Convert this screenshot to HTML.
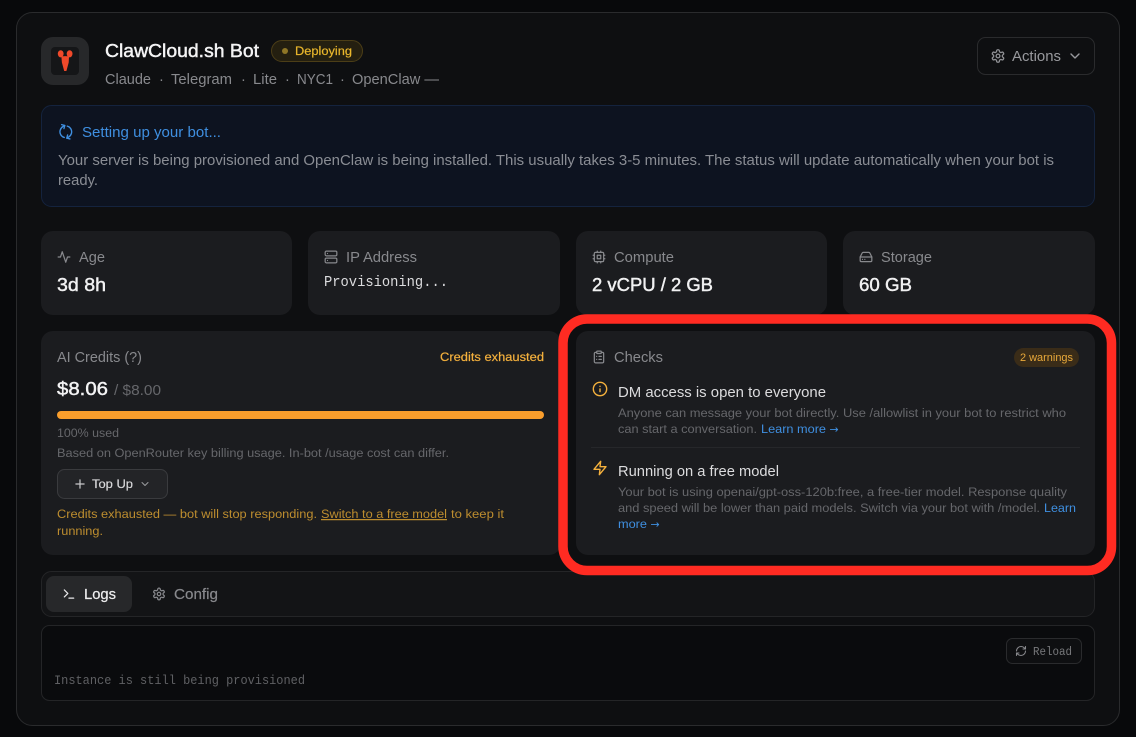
<!DOCTYPE html>
<html lang="en">
<head>
<meta charset="utf-8">
<title>ClawCloud.sh Bot</title>
<style>
html,body{margin:0;padding:0;background:#08090b;width:1136px;height:737px;overflow:hidden}
svg{display:block;position:absolute;left:0;top:0}
text{font-family:"Liberation Sans",sans-serif;font-size:14.5px;white-space:pre}
text.s{font-size:12.4px}
text.b{font-size:18.6px;stroke-width:.45px}
.mono{font-family:"Liberation Mono",monospace}
.m{stroke-width:.2px}
.i{fill:none;stroke-linecap:round;stroke-linejoin:round;stroke-width:2.1}
</style>
</head>
<body>
<svg xmlns="http://www.w3.org/2000/svg" width="1136" height="737" viewBox="0 0 1136 737">
<defs>
<g id="gear"><path d="M12.22 2h-.44a2 2 0 0 0-2 2v.18a2 2 0 0 1-1 1.73l-.43.25a2 2 0 0 1-2 0l-.15-.08a2 2 0 0 0-2.73.73l-.22.38a2 2 0 0 0 .73 2.73l.15.1a2 2 0 0 1 1 1.72v.51a2 2 0 0 1-1 1.74l-.15.09a2 2 0 0 0-.73 2.73l.22.38a2 2 0 0 0 2.73.73l.15-.08a2 2 0 0 1 2 0l.43.25a2 2 0 0 1 1 1.73V20a2 2 0 0 0 2 2h.44a2 2 0 0 0 2-2v-.18a2 2 0 0 1 1-1.73l.43-.25a2 2 0 0 1 2 0l.15.08a2 2 0 0 0 2.73-.73l.22-.39a2 2 0 0 0-.73-2.73l-.15-.08a2 2 0 0 1-1-1.74v-.5a2 2 0 0 1 1-1.74l.15-.09a2 2 0 0 0 .73-2.73l-.22-.38a2 2 0 0 0-2.73-.73l-.15.08a2 2 0 0 1-2 0l-.43-.25a2 2 0 0 1-1-1.73V4a2 2 0 0 0-2-2z"/><circle cx="12" cy="12" r="3"/></g>
<g id="refresh"><path d="M3 12a9 9 0 0 1 9-9 9.75 9.75 0 0 1 6.74 2.74L21 8"/><path d="M21 3v5h-5"/><path d="M21 12a9 9 0 0 1-9 9 9.75 9.75 0 0 1-6.74-2.74L3 16"/><path d="M8 16H3v5"/></g>
<path id="chev" d="m6 9 6 6 6-6"/>
</defs>

<rect width="1136" height="737" fill="#08090b"/>
<rect x="16.5" y="12.5" width="1103" height="713" rx="16" fill="#0e0f11" stroke="#2a2b2d"/>

<!-- header -->
<rect x="41" y="37" width="48" height="48" rx="12" fill="#27282a"/>
<rect x="51" y="47" width="28" height="28" rx="4" fill="#151618"/>
<g fill="#f0492a">
<ellipse cx="60.7" cy="53.8" rx="2.9" ry="3.6"/><ellipse cx="69.6" cy="53.8" rx="2.9" ry="3.6"/>
<path d="M61.4 56.6 Q65.2 55.6 69 56.6 L68.7 62.5 L66.4 71 L64.2 71 L61.9 62.5 Z"/>
</g>
<text x="105" y="57" class="b" fill="#f4f4f5" stroke="#f4f4f5" textLength="154" lengthAdjust="spacingAndGlyphs">ClawCloud.sh Bot</text>
<rect x="271.5" y="40.5" width="91" height="21" rx="10.5" fill="#241f10" stroke="#4c3e17"/>
<circle cx="285" cy="51" r="3" fill="#8f7626"/>
<text x="295" y="55" class="s m" fill="#eab72c" stroke="#eab72c" textLength="57" lengthAdjust="spacingAndGlyphs">Deploying</text>
<g fill="#88898d">
<text x="105" y="84" textLength="46" lengthAdjust="spacingAndGlyphs">Claude</text>
<text x="159" y="84">·</text>
<text x="171" y="84" textLength="61" lengthAdjust="spacingAndGlyphs">Telegram</text>
<text x="241" y="84">·</text>
<text x="253" y="84" textLength="24" lengthAdjust="spacingAndGlyphs">Lite</text>
<text x="285" y="84">·</text>
<text x="297" y="84" textLength="36" lengthAdjust="spacingAndGlyphs">NYC1</text>
<text x="340" y="84">·</text>
<text x="352" y="84" textLength="87" lengthAdjust="spacingAndGlyphs">OpenClaw —</text>
</g>
<rect x="977.5" y="37.5" width="117" height="37" rx="8" fill="#0e0f11" stroke="#2a2b2d"/>
<use href="#gear" class="i" stroke="#8f9094" transform="translate(990.5,48.5) scale(.625)"/>
<text x="1012" y="61" fill="#98999d" textLength="49" lengthAdjust="spacingAndGlyphs">Actions</text>
<use href="#chev" class="i" stroke="#98999d" transform="translate(1067,48) scale(.667)"/>

<!-- setup notice -->
<rect x="41.5" y="105.5" width="1053" height="101" rx="10" fill="#0d1320" stroke="#14233e"/>
<use href="#refresh" class="i" stroke="#3f8fe0" transform="translate(65.8,131.8) rotate(-75) scale(.65) translate(-12,-12)"/>
<text x="82" y="137" fill="#3f8fe0" textLength="139" lengthAdjust="spacingAndGlyphs">Setting up your bot...</text>
<text x="58" y="165" fill="#8a8d94" textLength="996" lengthAdjust="spacingAndGlyphs">Your server is being provisioned and OpenClaw is being installed. This usually takes 3-5 minutes. The status will update automatically when your bot is</text>
<text x="58" y="185" fill="#8a8d94" textLength="40" lengthAdjust="spacingAndGlyphs">ready.</text>

<!-- stats -->
<g fill="#1b1c1f">
<rect x="41" y="231" width="251" height="84" rx="12"/>
<rect x="308" y="231" width="252" height="84" rx="12"/>
<rect x="576" y="231" width="251" height="84" rx="12"/>
<rect x="843" y="231" width="252" height="84" rx="12"/>
</g>
<path class="i" stroke="#88898d" transform="translate(57,250) scale(.583)" d="M22 12h-4l-3 9L9 3l-3 9H2"/>
<text x="79" y="262" fill="#88898d" textLength="26" lengthAdjust="spacingAndGlyphs">Age</text>
<text x="57" y="291" class="b" fill="#f1f1f2" stroke="#f1f1f2" textLength="49" lengthAdjust="spacingAndGlyphs">3d 8h</text>

<g class="i" stroke="#88898d" transform="translate(324,250) scale(.583)"><rect x="2" y="2" width="20" height="8" rx="2"/><rect x="2" y="14" width="20" height="8" rx="2"/><path d="M6 6h.01M6 18h.01"/></g>
<text x="346" y="262" fill="#88898d" textLength="71" lengthAdjust="spacingAndGlyphs">IP Address</text>
<text x="324" y="286" class="mono" fill="#dcdcde" textLength="124" lengthAdjust="spacingAndGlyphs">Provisioning...</text>

<g class="i" stroke="#88898d" transform="translate(592,250) scale(.583)"><rect x="4" y="4" width="16" height="16" rx="2"/><rect x="9" y="9" width="6" height="6"/><path d="M15 2v2M15 20v2M2 15h2M2 9h2M20 15h2M20 9h2M9 2v2M9 20v2"/></g>
<text x="614" y="262" fill="#88898d" textLength="60" lengthAdjust="spacingAndGlyphs">Compute</text>
<text x="592" y="291" class="b" fill="#f1f1f2" stroke="#f1f1f2" textLength="121" lengthAdjust="spacingAndGlyphs">2 vCPU / 2 GB</text>

<g class="i" stroke="#88898d" transform="translate(859,250) scale(.583)"><path d="M22 12H2"/><path d="M5.45 5.11 2 12v6a2 2 0 0 0 2 2h16a2 2 0 0 0 2-2v-6l-3.45-6.89A2 2 0 0 0 16.76 4H7.24a2 2 0 0 0-1.79 1.11z"/><path d="M6 16h.01M10 16h.01"/></g>
<text x="881" y="262" fill="#88898d" textLength="51" lengthAdjust="spacingAndGlyphs">Storage</text>
<text x="859" y="291" class="b" fill="#f1f1f2" stroke="#f1f1f2" textLength="53" lengthAdjust="spacingAndGlyphs">60 GB</text>

<!-- credits -->
<rect x="41" y="331" width="520" height="224" rx="12" fill="#1b1c1f"/>
<text x="57" y="362" fill="#88898d" textLength="85" lengthAdjust="spacingAndGlyphs">AI Credits (?)</text>
<text x="440" y="361" class="s m" fill="#f5b13d" stroke="#f5b13d" textLength="104" lengthAdjust="spacingAndGlyphs">Credits exhausted</text>
<text x="57" y="395" class="b" fill="#f4f4f5" stroke="#f4f4f5" textLength="51" lengthAdjust="spacingAndGlyphs">$8.06</text>
<text x="114" y="395" fill="#66676b" textLength="47" lengthAdjust="spacingAndGlyphs">/ $8.00</text>
<rect x="57" y="411" width="487" height="8" rx="4" fill="#fa9e2c"/>
<text x="57" y="437" class="s" fill="#66676b" textLength="62" lengthAdjust="spacingAndGlyphs">100% used</text>
<text x="57" y="457" class="s" fill="#66676b" textLength="392" lengthAdjust="spacingAndGlyphs">Based on OpenRouter key billing usage. In-bot /usage cost can differ.</text>
<rect x="57.5" y="469.5" width="110" height="29" rx="7" fill="#232427" stroke="#3a3b3e"/>
<path class="i" stroke="#c8c8ca" transform="translate(73,477) scale(.583)" d="M5 12h14M12 5v14"/>
<text x="92" y="488" class="s m" fill="#d8d8da" stroke="#d8d8da" textLength="41" lengthAdjust="spacingAndGlyphs">Top Up</text>
<use href="#chev" class="i" stroke="#98999d" transform="translate(139,478) scale(.5)"/>
<g fill="#bd8d2f">
<text x="57" y="518" class="s" textLength="260" lengthAdjust="spacingAndGlyphs">Credits exhausted — bot will stop responding.</text>
<text x="321" y="518" class="s" text-decoration="underline" textLength="126" lengthAdjust="spacingAndGlyphs">Switch to a free model</text>
<text x="451" y="518" class="s" textLength="53" lengthAdjust="spacingAndGlyphs">to keep it</text>
<text x="57" y="535" class="s" textLength="46" lengthAdjust="spacingAndGlyphs">running.</text>
</g>

<!-- checks -->
<rect x="576" y="331" width="519" height="224" rx="12" fill="#1b1c1f"/>
<g class="i" stroke="#88898d" transform="translate(592,350) scale(.583)"><rect x="8" y="2" width="8" height="4" rx="1"/><path d="M16 4h2a2 2 0 0 1 2 2v14a2 2 0 0 1-2 2H6a2 2 0 0 1-2-2V6a2 2 0 0 1 2-2h2"/><path d="M12 11h4M12 16h4M8 11h.01M8 16h.01"/></g>
<text x="614" y="362" fill="#88898d" textLength="49" lengthAdjust="spacingAndGlyphs">Checks</text>
<rect x="1014" y="348" width="65" height="19" rx="9.5" fill="#3a2c18"/>
<text x="1020" y="361" style="font-size:11px" fill="#e9a93a" textLength="53" lengthAdjust="spacingAndGlyphs">2 warnings</text>
<g class="i" stroke="#f5b13d" transform="translate(592,381) scale(.667)"><circle cx="12" cy="12" r="10"/><path d="M12 16v-4M12 8h.01"/></g>
<text x="618" y="397" fill="#dcdcde" textLength="208" lengthAdjust="spacingAndGlyphs">DM access is open to everyone</text>
<text x="618" y="417" class="s" fill="#66676b" textLength="448" lengthAdjust="spacingAndGlyphs">Anyone can message your bot directly. Use /allowlist in your bot to restrict who</text>
<text x="618" y="433" class="s" fill="#66676b" textLength="139" lengthAdjust="spacingAndGlyphs">can start a conversation.</text>
<text x="761" y="433" class="s" fill="#3f8fe0" textLength="65" lengthAdjust="spacingAndGlyphs">Learn more</text>
<text x="829.5" y="433" class="s" style="font-family:'DejaVu Sans',sans-serif;font-size:11px" fill="#3f8fe0">→</text>
<rect x="591" y="447" width="489" height="1" fill="#26272a"/>
<path class="i" stroke="#f5b13d" transform="translate(592,460) scale(.667)" d="M13 2 3 14h9l-1 8 10-12h-9l1-8z"/>
<text x="618" y="476" fill="#dcdcde" textLength="161" lengthAdjust="spacingAndGlyphs">Running on a free model</text>
<text x="618" y="496" class="s" fill="#66676b" textLength="449" lengthAdjust="spacingAndGlyphs">Your bot is using openai/gpt-oss-120b:free, a free-tier model. Response quality</text>
<text x="618" y="512" class="s" fill="#66676b" textLength="422" lengthAdjust="spacingAndGlyphs">and speed will be lower than paid models. Switch via your bot with /model.</text>
<text x="1044" y="512" class="s" fill="#3f8fe0" textLength="32" lengthAdjust="spacingAndGlyphs">Learn</text>
<text x="618" y="528" class="s" fill="#3f8fe0" textLength="29" lengthAdjust="spacingAndGlyphs">more</text>
<text x="650.5" y="528" class="s" style="font-family:'DejaVu Sans',sans-serif;font-size:11px" fill="#3f8fe0">→</text>

<!-- tabs -->
<rect x="41.5" y="571.5" width="1053" height="45" rx="10" fill="#131416" stroke="#242527"/>
<rect x="46" y="576" width="86" height="36" rx="8" fill="#27282a"/>
<g class="i" stroke="#e8e8ea" transform="translate(62,587) scale(.583)"><path d="m4 17 6-6-6-6"/><path d="M12 19h8"/></g>
<text x="84" y="599" class="m" fill="#eeeeef" stroke="#eeeeef" textLength="32" lengthAdjust="spacingAndGlyphs">Logs</text>
<use href="#gear" class="i" stroke="#88898d" transform="translate(152,587) scale(.583)"/>
<text x="174" y="599" class="m" fill="#88898d" stroke="#88898d" textLength="44" lengthAdjust="spacingAndGlyphs">Config</text>

<!-- logs -->
<rect x="41.5" y="625.5" width="1053" height="75" rx="8" fill="#0a0b0d" stroke="#242527"/>
<rect x="1006.5" y="638.5" width="75" height="25" rx="6" fill="#0e0f11" stroke="#2a2b2d"/>
<use href="#refresh" class="i" stroke="#88898d" transform="translate(1015,645) scale(.5)"/>
<text x="1033" y="655" class="mono" style="font-size:11.5px" fill="#77787b" textLength="39" lengthAdjust="spacingAndGlyphs">Reload</text>
<text x="54" y="684" class="mono" style="font-size:12.5px" fill="#5f6063" textLength="251" lengthAdjust="spacingAndGlyphs">Instance is still being provisioned</text>

<!-- red annotation -->
<rect x="563" y="319" width="548.5" height="251.5" rx="24" fill="none" stroke="#ff2b22" stroke-width="9.5"/>
</svg>
</body>
</html>
